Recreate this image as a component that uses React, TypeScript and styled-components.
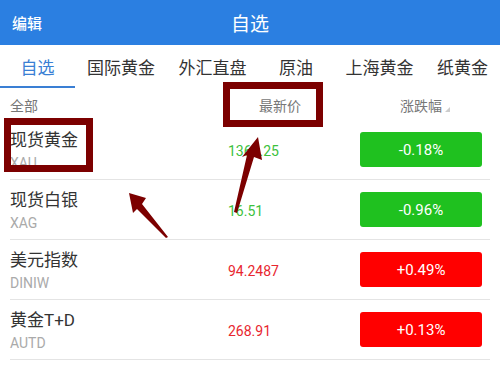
import React from "react";
import styled, { createGlobalStyle } from "styled-components";

const Global = createGlobalStyle`
  html, body { margin: 0; padding: 0; background: #fff; }
  body { width: 500px; height: 370px; overflow: hidden; }
  * { box-sizing: border-box; }
`;

const FONT = `Roboto, "Noto Sans CJK SC", sans-serif`;

const Page = styled.div`
  position: relative;
  width: 500px;
  height: 370px;
  overflow: hidden;
  background: #fff;
  font-family: ${FONT};
  color: #333;
`;

const Header = styled.header`
  height: 45px;
  background: #2b7fe1;
  display: grid;
  grid-template-columns: 1fr auto 1fr;
  align-items: center;
  color: #fff;
`;

const EditBtn = styled.span`
  padding-left: 12px;
  font-size: 15px;
  font-weight: 500;
`;

const Title = styled.h1`
  margin: 0;
  font-size: 19px;
  font-weight: 400;
`;

const Tabs = styled.nav`
  display: flex;
  height: 43px;
`;

const Tab = styled.div<{ $w: number; $active?: boolean }>`
  width: ${(p) => p.$w}px;
  flex: none;
  display: flex;
  align-items: center;
  justify-content: center;
  font-size: 17px;
  padding-top: 2px;
  color: ${(p) => (p.$active ? "#3a7fd4" : "#333")};
  border-bottom: 2px solid ${(p) => (p.$active ? "#3a7fd4" : "transparent")};
`;

const Grid = styled.div`
  display: grid;
  grid-template-columns: 218px 132px 122px;
  align-items: center;
  margin: 0 10px;
`;

const ColHead = styled(Grid)`
  height: 32px;
  font-size: 14px;
  color: #777;
  padding-top: 1px;
`;

const ColLabel = styled.span<{ $pad?: number }>`
  padding-left: ${(p) => p.$pad ?? 0}px;
  display: flex;
  align-items: flex-end;
  gap: 3px;
`;

const SortMark = styled.span`
  width: 0;
  height: 0;
  border-left: 5px solid transparent;
  border-bottom: 5px solid #ccc;
  margin-bottom: 3px;
`;

const Row = styled(Grid)`
  height: 60px;
  border-bottom: 1px solid #e4e4e4;
`;

const NameCell = styled.div`
  display: flex;
  flex-direction: column;
  padding-top: 4px;
`;

const Name = styled.span`
  font-size: 17px;
  line-height: 22px;
  color: #333;
`;

const Code = styled.span`
  font-size: 14px;
  line-height: 24px;
  color: #aaa;
`;

const Price = styled.span<{ $up: boolean }>`
  font-size: 14px;
  color: ${(p) => (p.$up ? "#e8262f" : "#3cc13c")};
  padding-top: 2px;
`;

const Badge = styled.div<{ $up: boolean }>`
  height: 35px;
  border-radius: 3px;
  background: ${(p) => (p.$up ? "#ff0000" : "#1fc11f")};
  color: #fff;
  font-size: 15px;
  display: flex;
  align-items: center;
  justify-content: center;
`;

const Overlay = styled.div`
  position: absolute;
  inset: 0;
  pointer-events: none;
`;

const MarkBox = styled.div<{ $x: number; $y: number; $w: number; $h: number }>`
  position: absolute;
  left: ${(p) => p.$x}px;
  top: ${(p) => p.$y}px;
  width: ${(p) => p.$w}px;
  height: ${(p) => p.$h}px;
  border: 7px solid #7c0000;
`;

const Arrows = styled.svg`
  position: absolute;
  left: 0;
  top: 0;
`;

const tabs = [
  { t: "自选", w: 75, a: true },
  { t: "国际黄金", w: 92 },
  { t: "外汇直盘", w: 91 },
  { t: "原油", w: 76 },
  { t: "上海黄金", w: 91 },
  { t: "纸黄金", w: 75 },
];

const rows = [
  { n: "现货黄金", c: "XAU", p: "1364.25", ch: "-0.18%", up: false },
  { n: "现货白银", c: "XAG", p: "16.51", ch: "-0.96%", up: false },
  { n: "美元指数", c: "DINIW", p: "94.2487", ch: "+0.49%", up: true },
  { n: "黄金T+D", c: "AUTD", p: "268.91", ch: "+0.13%", up: true },
];

export default function App() {
  return (
    <Page>
      <Global />
      <Header>
        <EditBtn>编辑</EditBtn>
        <Title>自选</Title>
        <span />
      </Header>
      <Tabs>
        {tabs.map((t) => (
          <Tab key={t.t} $w={t.w} $active={t.a}>
            {t.t}
          </Tab>
        ))}
      </Tabs>
      <ColHead>
        <ColLabel>全部</ColLabel>
        <ColLabel $pad={31}>最新价</ColLabel>
        <ColLabel $pad={40}>
          涨跌幅
          <SortMark />
        </ColLabel>
      </ColHead>
      {rows.map((r) => (
        <Row key={r.c}>
          <NameCell>
            <Name>{r.n}</Name>
            <Code>{r.c}</Code>
          </NameCell>
          <Price $up={r.up}>{r.p}</Price>
          <Badge $up={r.up}>{r.ch}</Badge>
        </Row>
      ))}
      <Overlay>
        <MarkBox $x={4} $y={118} $w={89} $h={54} />
        <MarkBox $x={223} $y={82} $w={100} $h={45} />
        <Arrows width="500" height="370" viewBox="0 0 500 370">
          <polygon
            points="258,137 262,160 254,157 237,213 234,212 247,155 242,157"
            fill="#7c0000"
          />
          <polygon
            points="129,193 146,198 142,204 168,237 166,238 137,209 133,213"
            fill="#7c0000"
          />
        </Arrows>
      </Overlay>
    </Page>
  );
}
